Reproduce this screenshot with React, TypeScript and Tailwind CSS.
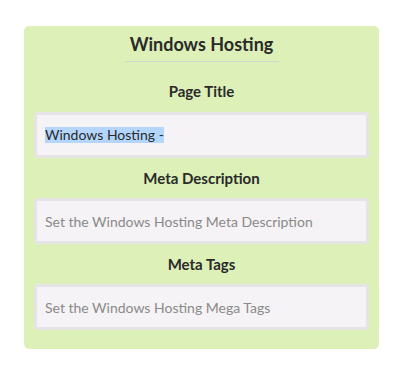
export default function App() {
  const fields = [
    { label: "Page Title", value: "Windows Hosting -", placeholder: "" },
    { label: "Meta Description", value: "", placeholder: "Set the Windows Hosting Meta Description" },
    { label: "Meta Tags", value: "", placeholder: "Set the Windows Hosting Mega Tags" },
  ];

  return (
    <div className="min-h-[373px] w-[402px] bg-white pt-[26px] pl-[24px] font-['Lato','Open_Sans',sans-serif]">
      <div className="w-[355px] rounded-[5px] bg-[#dcf0b8] px-[10px] pt-[8px] pb-[19px]">
        <div className="flex flex-col items-center">
          <h2 className="text-[18px] leading-[20px] font-bold text-[#2a2a2a]">Windows Hosting</h2>
          <div className="mt-[7px] h-px w-[154px] bg-[#cfd8cc]" />
        </div>

        {fields.map((f, i) => (
          <div key={f.label}>
            <div
              className={`text-center text-[15px] leading-[20px] font-bold text-[#2a2a2a] ${
                i === 0 ? "mt-[19px] mb-[11px]" : "my-[10px]"
              }`}
            >
              {f.label}
            </div>
            <div className="flex h-[46px] items-center rounded-[4px] border-[3px] border-[#e6e4e6] bg-[#f5f3f5] px-[8px] text-[14px]">
              {f.value ? (
                <span className="bg-[#b4d6fd] leading-[16px] text-[#2a2a2a]">{f.value}</span>
              ) : (
                <span className="text-[#8a898a]">{f.placeholder}</span>
              )}
            </div>
          </div>
        ))}
      </div>
    </div>
  );
}
